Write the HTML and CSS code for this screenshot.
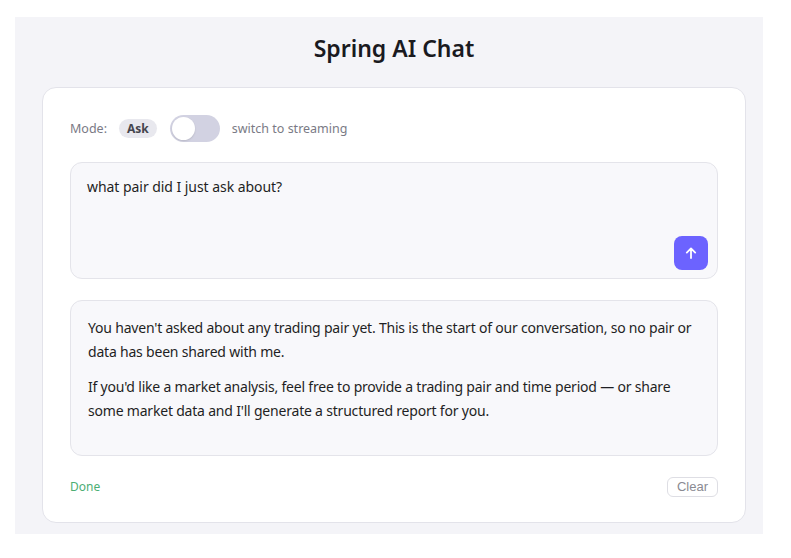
FILE: index.html
```html
<!DOCTYPE html>
<html>
<head>
<meta charset="utf-8">
<link rel="stylesheet" href="styles.css">
</head>
<body>
<div class="panel">
  <h1 class="title">Spring AI Chat</h1>
  <div class="card">
    <div class="mode-row">
      <span class="mode-label">Mode:</span>
      <span class="mode-pill">Ask</span>
      <span class="toggle"><span class="knob"></span></span>
      <span class="mode-hint">switch to streaming</span>
    </div>
    <div class="input-box">
      <div class="input-text">what pair did I just ask about?</div>
      <button class="send" aria-label="Send">
        <svg width="14" height="14" viewBox="0 0 14 14" fill="none" stroke="#fff" stroke-width="1.8" stroke-linecap="round" stroke-linejoin="round"><path d="M7 12V2.5M2.8 6.6L7 2.4l4.2 4.2"/></svg>
      </button>
    </div>
    <div class="response">
      <p>You haven't asked about any trading pair yet. This is the start of our conversation, so no pair or data has been shared with me.</p>
      <p>If you'd like a market analysis, feel free to provide a trading pair and time period — or share some market data and I'll generate a structured report for you.</p>
    </div>
    <div class="footer">
      <span class="status">Done</span>
      <button class="clear">Clear</button>
    </div>
  </div>
</div>
</body>
</html>
```
FILE: styles.css
```css
html, body {
  margin: 0;
  padding: 0;
  background: #ffffff;
}
body {
  font-family: "Noto Sans", "Open Sans", sans-serif;
  color: #1f1f24;
}
.panel {
  margin: 17px 0 0 15px;
  width: 748px;
  box-sizing: border-box;
  background: #f4f4f8;
  padding: 13px 17px 11px 27px;
}
.title {
  margin: 0 0 21px 0;
  text-align: center;
  font-size: 23px;
  font-weight: 600;
  line-height: 36px;
  color: #1a1a1f;
}
.card {
  background: #ffffff;
  border: 1px solid #e3e3ea;
  border-radius: 14px;
  padding: 27px 27px 25px 27px;
}
.mode-row {
  display: flex;
  align-items: center;
  height: 27px;
}
.mode-label {
  font-size: 12.5px;
  color: #7a7a85;
  margin-right: 12px;
}
.mode-pill {
  background: #e8e8ee;
  color: #45454d;
  font-size: 12px;
  font-weight: 700;
  border-radius: 10px;
  padding: 0 8px;
  height: 19px;
  line-height: 19px;
  margin-right: 13px;
}
.toggle {
  width: 50px;
  height: 27px;
  border-radius: 14px;
  background: #d2d2e2;
  display: flex;
  align-items: center;
  padding: 0 2px;
  box-sizing: border-box;
  margin-right: 12px;
}
.knob {
  width: 23px;
  height: 23px;
  border-radius: 50%;
  background: #ffffff;
  box-shadow: 0 1px 2px rgba(0,0,0,0.12);
}
.mode-hint {
  font-size: 12.5px;
  color: #7a7a85;
}
.input-box {
  position: relative;
  margin-top: 20px;
  height: 117px;
  box-sizing: border-box;
  background: #f8f8fb;
  border: 1px solid #e4e4ea;
  border-radius: 12px;
  padding: 13px 16px;
}
.input-text {
  font-size: 14px;
  letter-spacing: -0.05px;
  line-height: 22px;
  color: #1f1f24;
}
.send {
  position: absolute;
  right: 9px;
  bottom: 8px;
  width: 34px;
  height: 34px;
  border: none;
  border-radius: 8px;
  background: #6c63ff;
  display: flex;
  align-items: center;
  justify-content: center;
  padding: 0;
}
.response {
  margin-top: 21px;
  background: #f8f8fb;
  border: 1px solid #e4e4ea;
  border-radius: 12px;
  padding: 15px 18px 21px 17px;
  font-size: 14px;
  letter-spacing: -0.2px;
  line-height: 24px;
  color: #1f1f24;
}
.response p {
  margin: 0 0 11px 0;
}
.footer {
  margin-top: 20px;
  display: flex;
  align-items: center;
  justify-content: space-between;
  height: 21px;
}
.status {
  font-size: 12px;
  color: #4cae74;
}
.clear {
  font-family: "Liberation Sans", Arial, sans-serif;
  font-size: 13px;
  color: #8a8a92;
  background: #ffffff;
  border: 1px solid #dedee4;
  border-radius: 6px;
  height: 20px;
  padding: 0 9px;
  line-height: 18px;
}
```
